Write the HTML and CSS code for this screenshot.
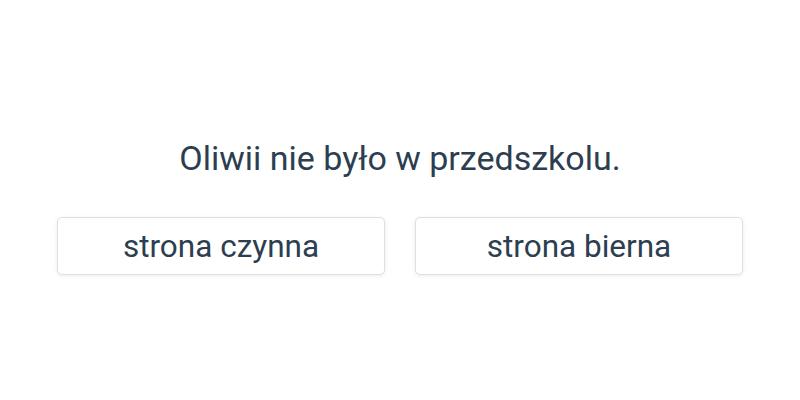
FILE: index.html
```html
<!DOCTYPE html>
<html lang="pl">
<head>
<meta charset="utf-8">
<link rel="stylesheet" href="styles.css">
</head>
<body>
<main class="quiz">
  <h1 class="question">Oliwii nie było w przedszkolu.</h1>
  <div class="answers">
    <button class="answer">strona czynna</button>
    <button class="answer">strona bierna</button>
  </div>
</main>
</body>
</html>
```
FILE: styles.css
```css
html, body {
  margin: 0;
  padding: 0;
  background: #ffffff;
}
body {
  font-family: Roboto, "Liberation Sans", sans-serif;
  color: #2c3e50;
  width: 800px;
  height: 400px;
}
.quiz {
  display: flex;
  flex-direction: column;
  align-items: center;
  padding: 135px 57px 0;
}
.question {
  margin: 0;
  font-size: 34px;
  font-weight: 400;
  line-height: 46px;
  height: 46px;
}
.answers {
  display: flex;
  gap: 30px;
  margin-top: 36px;
  width: 100%;
}
.answer {
  flex: 1;
  height: 58px;
  background: #fff;
  border: 1px solid #dcdfe3;
  border-radius: 5px;
  box-shadow: 0 1px 4px rgba(0, 0, 0, 0.08);
  font-family: inherit;
  font-size: 31.5px;
  color: #2c3e50;
  padding: 1px 0 0;
}
```
